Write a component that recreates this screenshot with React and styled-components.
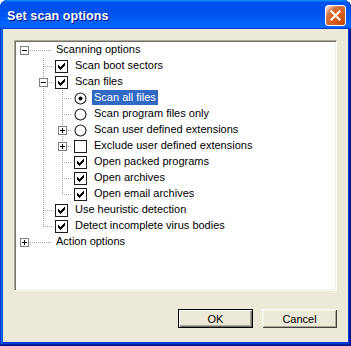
import React from "react";
import styled, { createGlobalStyle } from "styled-components";

const GlobalStyle = createGlobalStyle`
  html, body { margin: 0; padding: 0; background: #ffffff; }
  body { font-family: "Liberation Sans", Arial, sans-serif; }
  * { box-sizing: border-box; }
`;

const Window = styled.div`
  width: 351px;
  height: 346px;
  display: flex;
  flex-direction: column;
  background: #0831d9;
  border-radius: 8px 8px 0 0;
  overflow: hidden;
  box-shadow: inset -1px -1px #00138c, inset 1px 1px #0831d9,
    inset -2px -2px #001ea0, inset 2px 2px #166aee,
    inset -3px -3px #003bda, inset 3px 3px #0855dd;
`;

const TitleBar = styled.div`
  height: 29px;
  flex: none;
  display: flex;
  align-items: center;
  justify-content: space-between;
  padding: 0 5px 0 7px;
  background: linear-gradient(
    180deg,
    #0997ff,
    #0053ee 8%,
    #0050ee 40%,
    #0066ff 88%,
    #0066ff 93%,
    #005bff 95%,
    #003dd7 96%,
    #003dd7
  );
`;

const Title = styled.span`
  color: #ffffff;
  font-family: "Liberation Sans", Arial, sans-serif;
  font-weight: bold;
  font-size: 12.5px;
  letter-spacing: 0.1px;
  text-shadow: 1px 1px #0f1089;
  padding-top: 2px;
`;

const CloseButton = styled.div`
  width: 21px;
  height: 21px;
  margin-top: 2px;
  border: 1px solid #ffffff;
  border-radius: 3px;
  display: flex;
  align-items: center;
  justify-content: center;
  background: radial-gradient(
    circle at 90% 90%,
    #cc4600 0%,
    #dc6527 55%,
    #cd7546 70%,
    #ffccb2 90%,
    #ffffff 100%
  );
`;

const Body = styled.div`
  flex: 1;
  margin: 0 3px 4px 3px;
  background: #ece9d8;
  padding: 11px 11px 14px 11px;
  display: flex;
  flex-direction: column;
`;

const TreeBox = styled.div`
  height: 251px;
  flex: none;
  background: #ffffff;
  border-style: solid;
  border-width: 1px;
  border-color: #aca899 #ffffff #ffffff #aca899;
  box-shadow: inset 1px 1px #716f64, inset -1px -1px #f1efe2;
  padding: 1px;
  overflow: hidden;
`;

const TreeList = styled.div`
  margin-left: -1px;
  display: flex;
  flex-direction: column;
`;

const Row = styled.div`
  height: 16px;
  display: flex;
  align-items: flex-start;
  font-size: 11px;
  color: #000000;
  white-space: nowrap;
`;

const Cell = styled.svg`
  flex: none;
  display: block;
`;

const StateCell = styled.div`
  width: 20px;
  height: 16px;
  flex: none;
  display: flex;
  align-items: center;
  padding-left: 2px;
`;

const Label = styled.span`
  height: 15px;
  line-height: 15px;
  padding: 0 2px;
  background: ${(p) => (p.$selected ? "#316ac5" : "transparent")};
  color: ${(p) => (p.$selected ? "#ffffff" : "#000000")};
`;

const ButtonRow = styled.div`
  margin-top: 18px;
  display: flex;
  justify-content: flex-end;
  gap: 9px;
`;

const Button = styled.div`
  width: 75px;
  height: 19px;
  display: flex;
  align-items: center;
  justify-content: center;
  font-size: 11px;
  color: #000000;
  background: #ece9d8;
  border: 1px solid ${(p) => (p.$default ? "#000000" : "transparent")};
  box-shadow: ${(p) =>
    p.$default
      ? "inset 1px 1px #ffffff, inset -1px -1px #716f64, inset -2px -2px #aca899"
      : "inset 1px 1px #ffffff, inset -1px -1px #716f64, inset 2px 2px #f1efe2, inset -2px -2px #aca899"};
  ${(p) =>
    !p.$default &&
    `border: none; box-shadow: inset 1px 1px #ffffff, inset -1px -1px #404040, inset 2px 2px #f1efe2, inset -2px -2px #aca899;`}
`;

const DOT = "#a0a0a0";

function Guide({ on }) {
  return (
    <Cell width="19" height="16" viewBox="0 0 19 16" shapeRendering="crispEdges">
      {on && <line x1="9.5" y1="0" x2="9.5" y2="16" stroke={DOT} strokeDasharray="1 1" />}
    </Cell>
  );
}

function Connector({ level, last, expander }) {
  return (
    <Cell width="19" height="16" viewBox="0 0 19 16" shapeRendering="crispEdges">
      {level > 0 && (
        <line x1="9.5" y1="0" x2="9.5" y2={last ? 9 : 16} stroke={DOT} strokeDasharray="1 1" />
      )}
      <line x1="11" y1="8.5" x2="19" y2="8.5" stroke={DOT} strokeDasharray="1 1" />
      {expander && (
        <g>
          <rect x="5.5" y="4.5" width="8" height="8" fill="#ffffff" stroke="#808080" />
          <line x1="7" y1="8.5" x2="12" y2="8.5" stroke="#000000" />
          {expander === "plus" && <line x1="9.5" y1="6" x2="9.5" y2="11" stroke="#000000" />}
        </g>
      )}
    </Cell>
  );
}

const checkTops = [2, 3, 4, 3, 2, 1, 0];

function CheckBox({ checked }) {
  return (
    <svg width="13" height="13" viewBox="0 0 13 13" shapeRendering="crispEdges">
      <rect x="0.5" y="0.5" width="12" height="12" fill="#ffffff" stroke="#1c1c1c" />
      {checked &&
        checkTops.map((t, c) => (
          <rect key={c} x={3 + c} y={3 + t} width="1" height="3" fill="#000000" />
        ))}
    </svg>
  );
}

function Radio({ on }) {
  return (
    <svg width="13" height="13" viewBox="0 0 13 13">
      <circle cx="6.5" cy="6.5" r="5.5" fill="#ffffff" stroke="#1c1c1c" strokeWidth="1.1" />
      {on && <circle cx="6.5" cy="6.5" r="2" fill="#000000" />}
    </svg>
  );
}

function StateIcon({ state }) {
  if (!state) {
    return (
      <Cell width="20" height="16" viewBox="0 0 20 16" shapeRendering="crispEdges">
        <line x1="0" y1="8.5" x2="17" y2="8.5" stroke={DOT} strokeDasharray="1 1" />
      </Cell>
    );
  }
  return (
    <StateCell>
      {state === "checked" && <CheckBox checked />}
      {state === "unchecked" && <CheckBox />}
      {state === "radioOn" && <Radio on />}
      {state === "radioOff" && <Radio />}
    </StateCell>
  );
}

const items = [
  { level: 0, label: "Scanning options", expander: "minus", through: [] },
  { level: 1, label: "Scan boot sectors", state: "checked", through: [false] },
  { level: 1, label: "Scan files", state: "checked", expander: "minus", through: [false] },
  { level: 2, label: "Scan all files", state: "radioOn", selected: true, through: [false, true] },
  { level: 2, label: "Scan program files only", state: "radioOff", through: [false, true] },
  { level: 2, label: "Scan user defined extensions", state: "radioOff", expander: "plus", through: [false, true] },
  { level: 2, label: "Exclude user defined extensions", state: "unchecked", expander: "plus", through: [false, true] },
  { level: 2, label: "Open packed programs", state: "checked", through: [false, true] },
  { level: 2, label: "Open archives", state: "checked", through: [false, true] },
  { level: 2, label: "Open email archives", state: "checked", last: true, through: [false, true] },
  { level: 1, label: "Use heuristic detection", state: "checked", through: [false] },
  { level: 1, label: "Detect incomplete virus bodies", state: "checked", last: true, through: [false] },
  { level: 0, label: "Action options", expander: "plus", through: [] },
];

export default function App() {
  return (
    <>
      <GlobalStyle />
      <Window>
        <TitleBar>
          <Title>Set scan options</Title>
          <CloseButton>
            <svg width="11" height="11" viewBox="0 0 11 11">
              <path d="M1.5 1.5 L9.5 9.5 M9.5 1.5 L1.5 9.5" stroke="#ffffff" strokeWidth="2" strokeLinecap="square" />
            </svg>
          </CloseButton>
        </TitleBar>
        <Body>
          <TreeBox>
            <TreeList>
              {items.map((it, i) => (
                <Row key={i}>
                  {it.through.map((on, j) => (
                    <Guide key={j} on={on} />
                  ))}
                  <Connector level={it.level} last={it.last} expander={it.expander} />
                  <StateIcon state={it.state} />
                  <Label $selected={it.selected}>{it.label}</Label>
                </Row>
              ))}
            </TreeList>
          </TreeBox>
          <ButtonRow>
            <Button $default>OK</Button>
            <Button>Cancel</Button>
          </ButtonRow>
        </Body>
      </Window>
    </>
  );
}
